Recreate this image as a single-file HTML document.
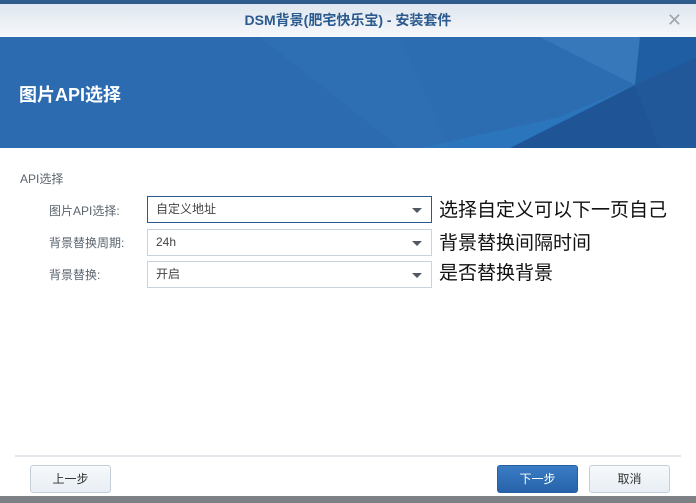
<!DOCTYPE html>
<html><head><meta charset="utf-8"><style>
*{margin:0;padding:0;box-sizing:border-box}
body{width:696px;height:503px;overflow:hidden;background:#fff;position:relative;font-family:"Liberation Sans","Noto Sans CJK SC",sans-serif}
.abs{position:absolute}
.top{left:0;top:0;width:696px;height:4px;background:#2e5a8c}
.title{left:0;top:4px;width:696px;height:33px;background:linear-gradient(#dfe6ef,#f6f8fa);text-align:center;line-height:33px;color:#2b5a8e;font-size:14px;font-weight:bold}
.x{right:14px;top:4px;line-height:33px;color:#a0a6ad;font-size:18px}
.banner{left:0;top:37px;width:696px;height:111px;background:#2d6bb0;overflow:hidden}
.banner h1{position:absolute;left:19px;top:44px;color:#fff;font-size:18px;font-weight:bold}
.lbl{color:#5a646e;font-size:12px}
.sel{left:147px;width:285px;height:27px;border:1px solid #c9d3de;font-size:12px;color:#444;line-height:25px;padding-left:8px}
.sel:after{content:"";position:absolute;right:9px;top:11px;border-left:5px solid transparent;border-right:5px solid transparent;border-top:5px solid #505a64}
.note{left:439px;font-size:19px;color:#111}
.btn{top:465px;width:81px;height:28px;border:1px solid #c3ced9;border-radius:3px;background:linear-gradient(#f7f9fb,#e8eef4);font-size:12px;color:#333;text-align:center;line-height:26px}
</style></head><body>
<div class="abs top"></div>
<div class="abs title">DSM背景(肥宅快乐宝) - 安装套件</div>
<div class="abs x">✕</div>
<div class="abs banner">
<svg width="696" height="111" style="position:absolute;left:0;top:0">
<polygon points="260,0 696,0 696,111 400,111" fill="#2e6eb2"/>
<polygon points="400,0 696,0 696,111 450,111" fill="#2c6cb1"/>
<polygon points="540,0 640,0 635,48" fill="#3c7dbe" opacity=".7"/>
<polygon points="635,48 696,20 696,111 660,111" fill="#21589a"/>
<polygon points="640,0 696,0 696,20 635,48" fill="#1f5ea3"/>
<polygon points="510,111 635,48 660,111" fill="#1f5596"/>
<polygon points="420,111 510,111 635,48 560,80" fill="#2b7bc3" opacity=".6"/>
</svg>
<h1>图片API选择</h1>
</div>
<div class="abs lbl" style="left:20px;top:170px">API选择</div>
<div class="abs lbl" style="left:49px;top:202px">图片API选择:</div>
<div class="abs lbl" style="left:49px;top:234px">背景替换周期:</div>
<div class="abs lbl" style="left:49px;top:266px">背景替换:</div>
<div class="abs sel" style="top:196px;border-color:#2b5a8e">自定义地址</div>
<div class="abs sel" style="top:229px">24h</div>
<div class="abs sel" style="top:261px">开启</div>
<div class="abs note" style="top:195px">选择自定义可以下一页自己</div>
<div class="abs note" style="top:228px">背景替换间隔时间</div>
<div class="abs note" style="top:258px">是否替换背景</div>
<div class="abs" style="left:15px;top:455px;width:666px;height:2px;background:#e3e6ea"></div>
<div class="abs btn" style="left:30px">上一步</div>
<div class="abs btn" style="left:497px;background:linear-gradient(#3a7cc4,#2763ab);border-color:#2560a5;color:#fff">下一步</div>
<div class="abs btn" style="left:589px">取消</div>
<div class="abs" style="left:0;top:496px;width:696px;height:7px;background:#7d8185"></div>
</body></html>
